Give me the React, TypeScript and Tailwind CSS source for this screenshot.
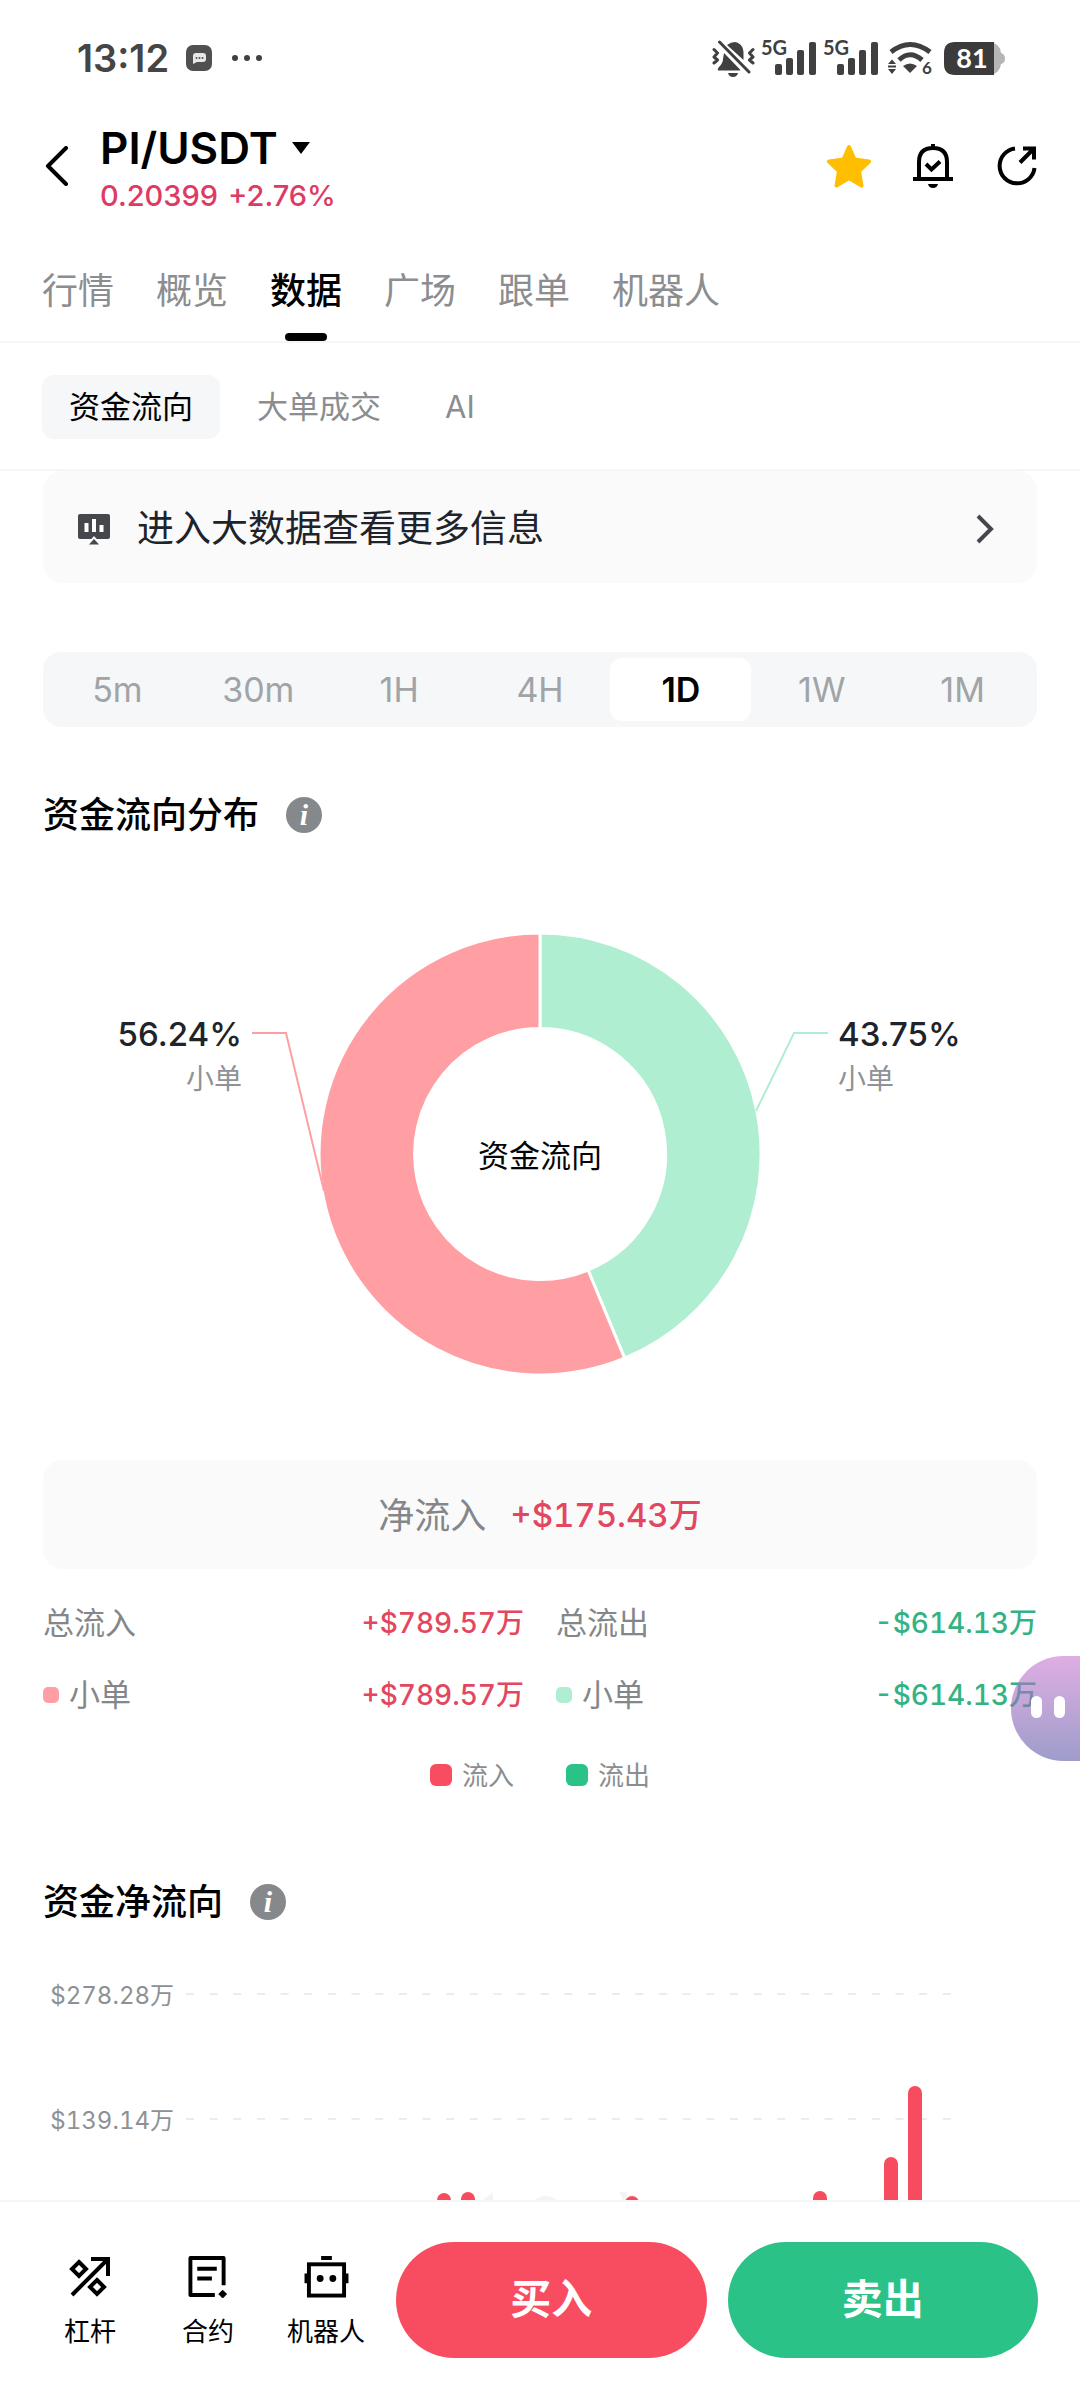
import React, { useState } from 'react';

const mainTabs = ['行情', '概览', '数据', '广场', '跟单', '机器人'];
const subTabs = ['资金流向', '大单成交', 'AI'];
const periods = ['5m', '30m', '1H', '4H', '1D', '1W', '1M'];

const flows = [
  { total: '总流入', value: '+$789.57万', text: 'text-[#e2475f]', dot: 'bg-[#ff9fa4]' },
  { total: '总流出', value: '-$614.13万', text: 'text-[#35b283]', dot: 'bg-[#afeed0]' },
];

const gridLines = [
  { y: 62, label: '$278.28万' },
  { y: 187, label: '$139.14万' },
];

const bars = [
  { x: 394, top: 261 },
  { x: 418, top: 260 },
  { x: 582, top: 264 },
  { x: 770, top: 259 },
  { x: 841, top: 225 },
  { x: 865, top: 154 },
];

function Signal() {
  return (
    <svg viewBox="0 0 55 36" className="h-9 w-[55px] overflow-visible" fill="#404040" aria-hidden="true">
      <text x="0" y="15" fontSize="20" fontWeight="700" fontFamily="Lato, sans-serif">5G</text>
      <rect x="14" y="24" width="7" height="11" rx="2" />
      <rect x="25" y="18" width="7" height="17" rx="2" />
      <rect x="36" y="10" width="7" height="25" rx="2" />
      <rect x="48" y="2" width="7" height="33" rx="2" />
    </svg>
  );
}

function StatusBar() {
  return (
    <div className="flex h-[116px] items-center pr-[75px] pl-[77px] text-[#454545]">
      <span className="text-[38px] leading-none font-semibold">13:12</span>
      <svg viewBox="0 0 26 26" className="ml-[17px] h-[26px] w-[26px]" aria-hidden="true">
        <rect width="26" height="26" rx="7" fill="#505050" />
        <path d="M10 8h7q3 0 3 3v3q0 3-3 3h-6l-4 2v-8q0-3 3-3z" fill="#e8e8e8" />
        <g fill="#505050"><circle cx="10.500" cy="13" r="1" /><circle cx="13.500" cy="13" r="1" /><circle cx="16.500" cy="13" r="1" /></g>
      </svg>
      <svg viewBox="0 0 30 8" className="ml-5 h-2 w-[30px]" fill="#404040" aria-hidden="true">
        <circle cx="3" cy="4" r="3" /><circle cx="15" cy="4" r="3" /><circle cx="27" cy="4" r="3" />
      </svg>
      <div className="ml-auto flex items-center">
        <svg viewBox="0 0 43 37" className="h-[37px] w-[43px]" fill="#404040" aria-hidden="true">
          <path d="M15 5Q19 2 23 2C29 3 31.500 8 31.500 13V20z" />
          <path d="M12 13 28 29.500V30.500H6Q5 29 7 27Q11 23 11 19z" />
          <path d="M16 33H26Q25 37 21 37Q17 37 16 33z" />
          <path d="M7.500 2 37 32M2 9.500 5.500 13 2 17 5.500 20 2 23M41 9.500 37.500 13 41 17 37.500 20 41 23" fill="none" stroke="#404040" strokeWidth="3" strokeLinecap="round" strokeLinejoin="round" />
        </svg>
        <div className="ml-1.5 flex gap-[7px]"><Signal /><Signal /></div>
        <svg viewBox="0 0 46 34" className="ml-2.5 h-[34px] w-[46px] overflow-visible" fill="#404040" aria-hidden="true">
          <path d="M3 11Q22-4 42 11M11 19Q22 8.500 34 19" fill="none" stroke="#404040" strokeWidth="5" />
          <path d="M15 25Q22 20 29 25L22 32z" />
          <path d="M0 23 4 18.500 8 23zM0 24.500H8V26.500H0zM0 28H8L4 33z" />
          <text x="34" y="33" fontSize="17" fontWeight="700" fontFamily="Lato, sans-serif">6</text>
        </svg>
        <svg viewBox="0 0 61 33" className="ml-2.5 h-[33px] w-[61px]" aria-hidden="true">
          <path d="M45 0Q56 1 57 11Q61 12 61 16.500Q61 21 57 22Q56 32 45 33z" fill="#b5b5b5" />
          <path d="M11 0H50V33H11Q0 33 0 22V11Q0 0 11 0z" fill="#3b3b3b" />
          <text x="28" y="26" fontSize="27" fontWeight="700" fontFamily="Lato, sans-serif" textAnchor="middle" fill="white">81</text>
        </svg>
      </div>
    </div>
  );
}

function Header() {
  return (
    <header className="flex items-start pt-1 pr-[43px] pl-[45px]">
      <button type="button" aria-label="返回" className="mt-[26px] mr-[31px]">
        <svg viewBox="0 0 24 40" className="h-10 w-6" fill="none" stroke="black" strokeWidth="4" strokeLinejoin="round" strokeLinecap="round">
          <path d="M21 2 3 20 21 38" />
        </svg>
      </button>
      <div>
        <button type="button" className="flex items-center gap-3.5 text-[44px] leading-[56px] font-semibold text-black">
          PI/USDT
          <svg viewBox="0 0 18 12" className="h-3 w-[18px]" aria-hidden="true"><path d="M0 0H18L9 12z" /></svg>
        </button>
        <p className="flex gap-2.5 text-[29px] leading-10 font-medium text-[#de3b64]">
          <span>0.20399</span>
          <span>+2.76%</span>
        </p>
      </div>
      <div className="mt-6 ml-auto flex items-center">
        <button type="button" aria-label="收藏">
          <svg viewBox="0 0 44 44" className="h-11 w-11" fill="#ffbf00" stroke="#ffbf00" strokeWidth="4" strokeLinejoin="round">
            <path d="M22 3 27.500 15.500 42 17.500 32 27 34.500 41.500 22 34 9.500 41.500 12 27 2 17.500 16.500 15.500z" />
          </svg>
        </button>
        <button type="button" aria-label="价格提醒" className="ml-[42px]">
          <svg viewBox="0 0 40 44" className="h-11 w-10" fill="none" stroke="black" strokeWidth="4">
            <path d="M20 0V4M0 35H40M6 35V18Q6 4 20 4Q34 4 34 18V35" />
            <path d="M13 20 18.500 25.500 27 17.500" />
            <path d="M15 40H25Q24 44 20 44Q16 44 15 40z" fill="black" stroke="none" />
          </svg>
        </button>
        <button type="button" aria-label="分享" className="ml-11">
          <svg viewBox="0 0 40 40" className="h-10 w-10" fill="none" stroke="black" strokeWidth="4">
            <path d="M18 2.500A17.500 17.500 0 1 0 37.500 22" />
            <path d="M23 16.500 37 2.500M26 2.500H37V13.500" />
          </svg>
        </button>
      </div>
    </header>
  );
}

function SectionTitle({ children }: { children: React.ReactNode }) {
  return (
    <div className="flex h-[60px] items-center gap-[27px]">
      <h2 className="text-[36px] font-medium text-black">{children}</h2>
      <button
        type="button"
        aria-label="说明"
        className="flex h-9 w-9 items-center justify-center rounded-full bg-[#86898c] font-['Liberation_Serif',serif] text-[30px] leading-none font-bold text-white italic"
      >
        i
      </button>
    </div>
  );
}

function Donut() {
  return (
    <svg viewBox="0 0 994 615" className="block h-auto w-full" role="img" aria-label="资金流向 流出 43.75% 流入 56.24%">
      <g transform="translate(497 309)" stroke="white" strokeWidth="3">
        <path d="M0-221A221 221 0 0 1 84.600 204.200L48 116A125.500 125.500 0 0 0 0-125.500z" fill="#afeed0" />
        <path d="M84.600 204.200A221 221 0 1 1 0-221V-125.500A125.500 125.500 0 1 0 48 116z" fill="#ff9fa4" />
      </g>
      <path d="M209 188H243L281 346" fill="none" stroke="#ff9fa4" strokeWidth="2" />
      <path d="M785 188H751L713 266" fill="none" stroke="#afeed0" strokeWidth="2" />
      <g fontSize="33" fontWeight="500" fill="#202329">
        <text x="199" y="201" textAnchor="end">56.24%</text>
        <text x="795" y="201">43.75%</text>
      </g>
      <g fontSize="28" fill="#909295">
        <text x="199" y="244" textAnchor="end">小单</text>
        <text x="795" y="244">小单</text>
      </g>
      <text x="497" y="322" textAnchor="middle" fontSize="31" fill="#050505">资金流向</text>
    </svg>
  );
}

function NetFlowChart() {
  return (
    <svg viewBox="0 0 994 268" className="block h-auto w-full tabular-nums" role="img" aria-label="资金净流向">
      <path d="M440 268 450 260V268zM492 268Q502 260 514 268zM576 260H584V268H580z" fill="#f4f4f4" />
      {gridLines.map((line) => (
        <g key={line.y}>
          <text x="131" y={line.y + 10} textAnchor="end" fontSize="24" fill="#8e9194">{line.label}</text>
          <path d={`M143 ${line.y}H908`} stroke="#ececec" strokeWidth="2" strokeDasharray="8 15.650" />
        </g>
      ))}
      {bars.map((bar) => (
        <rect key={bar.x} x={bar.x} y={bar.top} width="14" height={280 - bar.top} rx="7" fill="#f74c60" />
      ))}
    </svg>
  );
}

function Footer() {
  const item = 'flex w-[118px] flex-col items-center text-[26px] leading-9 text-black';
  const trade = 'h-[116px] flex-1 rounded-full text-[41px] font-bold text-white';
  return (
    <footer className="flex h-[200px] shrink-0 items-start border-t-2 border-[#f5f5f5] bg-white pt-10 pr-[42px] pl-[31px]">
      <nav className="mr-[11px] flex pt-3.5">
        <a href="#margin" className={item}>
          <svg viewBox="0 0 42 42" className="mb-4 h-[42px] w-[42px]" fill="none" stroke="black" strokeWidth="4" aria-hidden="true">
            <path d="M3 39 38 4M22 3H39V20" />
            <path d="M10 6 17 13 10 20 3 13zM28 24 35 31 28 38 21 31z" />
          </svg>
          杠杆
        </a>
        <a href="#futures" className={item}>
          <svg viewBox="0 0 40 43" className="mb-4 h-[42px] w-10" fill="none" stroke="black" strokeWidth="4" aria-hidden="true">
            <path d="M27 40H2V2H36V30" strokeLinejoin="round" />
            <path d="M9 13H29M9 23H24" />
            <path d="M35 35 39 39 35 43 31 39z" fill="black" stroke="black" strokeWidth="1" />
          </svg>
          合约
        </a>
        <a href="#bots" className={item}>
          <svg viewBox="0 0 45 43" className="mb-4 h-[42px] w-[45px]" fill="none" stroke="black" strokeWidth="4" aria-hidden="true">
            <rect x="4.500" y="8.500" width="36" height="32" />
            <path d="M17 2H28M2 18V28M43 18V28" />
            <circle cx="16" cy="23" r="3.500" fill="black" stroke="none" />
            <circle cx="29" cy="23" r="3.500" fill="black" stroke="none" />
          </svg>
          机器人
        </a>
      </nav>
      <div className="flex flex-1 gap-[21px]">
        <button type="button" className={`${trade} bg-[#f84d60]`}>买入</button>
        <button type="button" className={`${trade} bg-[#2bc287]`}>卖出</button>
      </div>
    </footer>
  );
}

export default function App() {
  const [tab, setTab] = useState('数据');
  const [sub, setSub] = useState('资金流向');
  const [period, setPeriod] = useState('1D');

  return (
    <div className="flex h-screen flex-col overflow-hidden bg-white font-[Inter,'Noto_Sans_CJK_SC',sans-serif]">
      <StatusBar />
      <Header />
      <nav className="flex h-[127px] shrink-0 gap-[42px] border-b-2 border-[#f5f5f5] px-[42px] pt-6 text-[36px]">
        {mainTabs.map((t) => (
          <button
            key={t}
            type="button"
            onClick={() => setTab(t)}
            className={`relative ${t === tab ? 'font-medium text-black' : 'text-[#8b8d90]'}`}
          >
            {t}
            {t === tab && <span className="absolute bottom-0 left-1/2 h-2 w-[42px] -translate-x-1/2 rounded-sm bg-black" />}
          </button>
        ))}
      </nav>
      <nav className="flex h-[128px] shrink-0 items-center gap-2.5 border-b-2 border-[#f6f6f6] px-[42px] pt-0.5 text-[31px]">
        {subTabs.map((t) => (
          <button
            key={t}
            type="button"
            onClick={() => setSub(t)}
            className={`h-16 rounded-xl px-[27px] ${t === sub ? 'bg-[#f5f7f8] text-black' : 'text-[#8b8d90]'}`}
          >
            {t}
          </button>
        ))}
      </nav>

      <main className="min-h-0 flex-1 overflow-hidden px-[43px]">
        <a href="#big-data" className="flex h-28 items-center rounded-[20px] bg-[#fafafa] pt-1 pr-[43px] pl-[35px] text-[37px] text-[#202329]">
          <svg viewBox="0 0 32 31" className="mr-[27px] h-[31px] w-8" aria-hidden="true">
            <rect width="32" height="25" rx="2" fill="#45474d" />
            <path d="M16 22 24 31H8z" fill="#fafafa" />
            <path d="M16 25 21 30.500H11z" fill="#45474d" />
            <path d="M8.500 9V18M16 5V18M23.500 11V18" stroke="white" strokeWidth="4" />
          </svg>
          进入大数据查看更多信息
          <svg viewBox="0 0 18 30" className="ml-auto h-[30px] w-[18px]" fill="none" stroke="#45474d" strokeWidth="4" aria-hidden="true">
            <path d="M2 2 15 15 2 28" />
          </svg>
        </a>

        <div className="mt-[69px] flex h-[75px] rounded-[18px] bg-[#f5f7f8] px-1 py-1.5 text-[34px]">
          {periods.map((p) => (
            <button
              key={p}
              type="button"
              onClick={() => setPeriod(p)}
              className={`flex-1 rounded-xl ${p === period ? 'bg-white font-semibold text-black' : 'text-[#a1a4a7]'}`}
            >
              {p}
            </button>
          ))}
        </div>

        <section className="mt-[58px]">
          <SectionTitle>资金流向分布</SectionTitle>
          <Donut />
          <p className="flex h-[109px] items-center justify-center gap-6 rounded-[20px] bg-[#fafafa] pt-0.5 text-[36px] text-[#84878a]">
            净流入
            <span className="text-[33px] font-medium text-[#e2475f] tabular-nums">+$175.43万</span>
          </p>
          <div className="relative mt-[18px]">
            <div className="grid grid-cols-2 gap-8 text-[31px] text-[#84878a]">
              {flows.map((f) => (
                <dl key={f.total}>
                  <div className="flex h-[72px] items-center justify-between">
                    <dt>{f.total}</dt>
                    <dd className={`text-[28px] font-medium tabular-nums ${f.text}`}>{f.value}</dd>
                  </div>
                  <div className="flex h-[72px] items-center justify-between">
                    <dt className="flex items-center gap-2.5">
                      <span className={`h-4 w-4 rounded-[5px] ${f.dot}`} />
                      小单
                    </dt>
                    <dd className={`text-[28px] font-medium tabular-nums ${f.text}`}>{f.value}</dd>
                  </div>
                </dl>
              ))}
            </div>
            <button
              type="button"
              aria-label="智能助手"
              className="absolute top-[69px] -right-[43px] flex h-[105px] w-[69px] items-center gap-3 rounded-l-[53px] bg-linear-to-b from-[#c978d0]/60 to-[#5d5aa8]/60 pb-1 pl-5"
            >
              <span className="h-[22px] w-[11px] rounded-full bg-white" />
              <span className="h-[22px] w-[11px] rounded-full bg-white" />
            </button>
          </div>
          <div className="mt-[22px] flex h-11 items-center justify-center gap-[52px] text-[26px] text-[#8b8d90]">
            <span className="flex items-center gap-2.5"><span className="h-[22px] w-[22px] rounded-md bg-[#f84d60]" />流入</span>
            <span className="flex items-center gap-2.5"><span className="h-[22px] w-[22px] rounded-md bg-[#2bc287]" />流出</span>
          </div>
        </section>

        <section className="mt-[75px]">
          <SectionTitle>资金净流向</SectionTitle>
          <NetFlowChart />
        </section>
      </main>
      <Footer />
    </div>
  );
}
